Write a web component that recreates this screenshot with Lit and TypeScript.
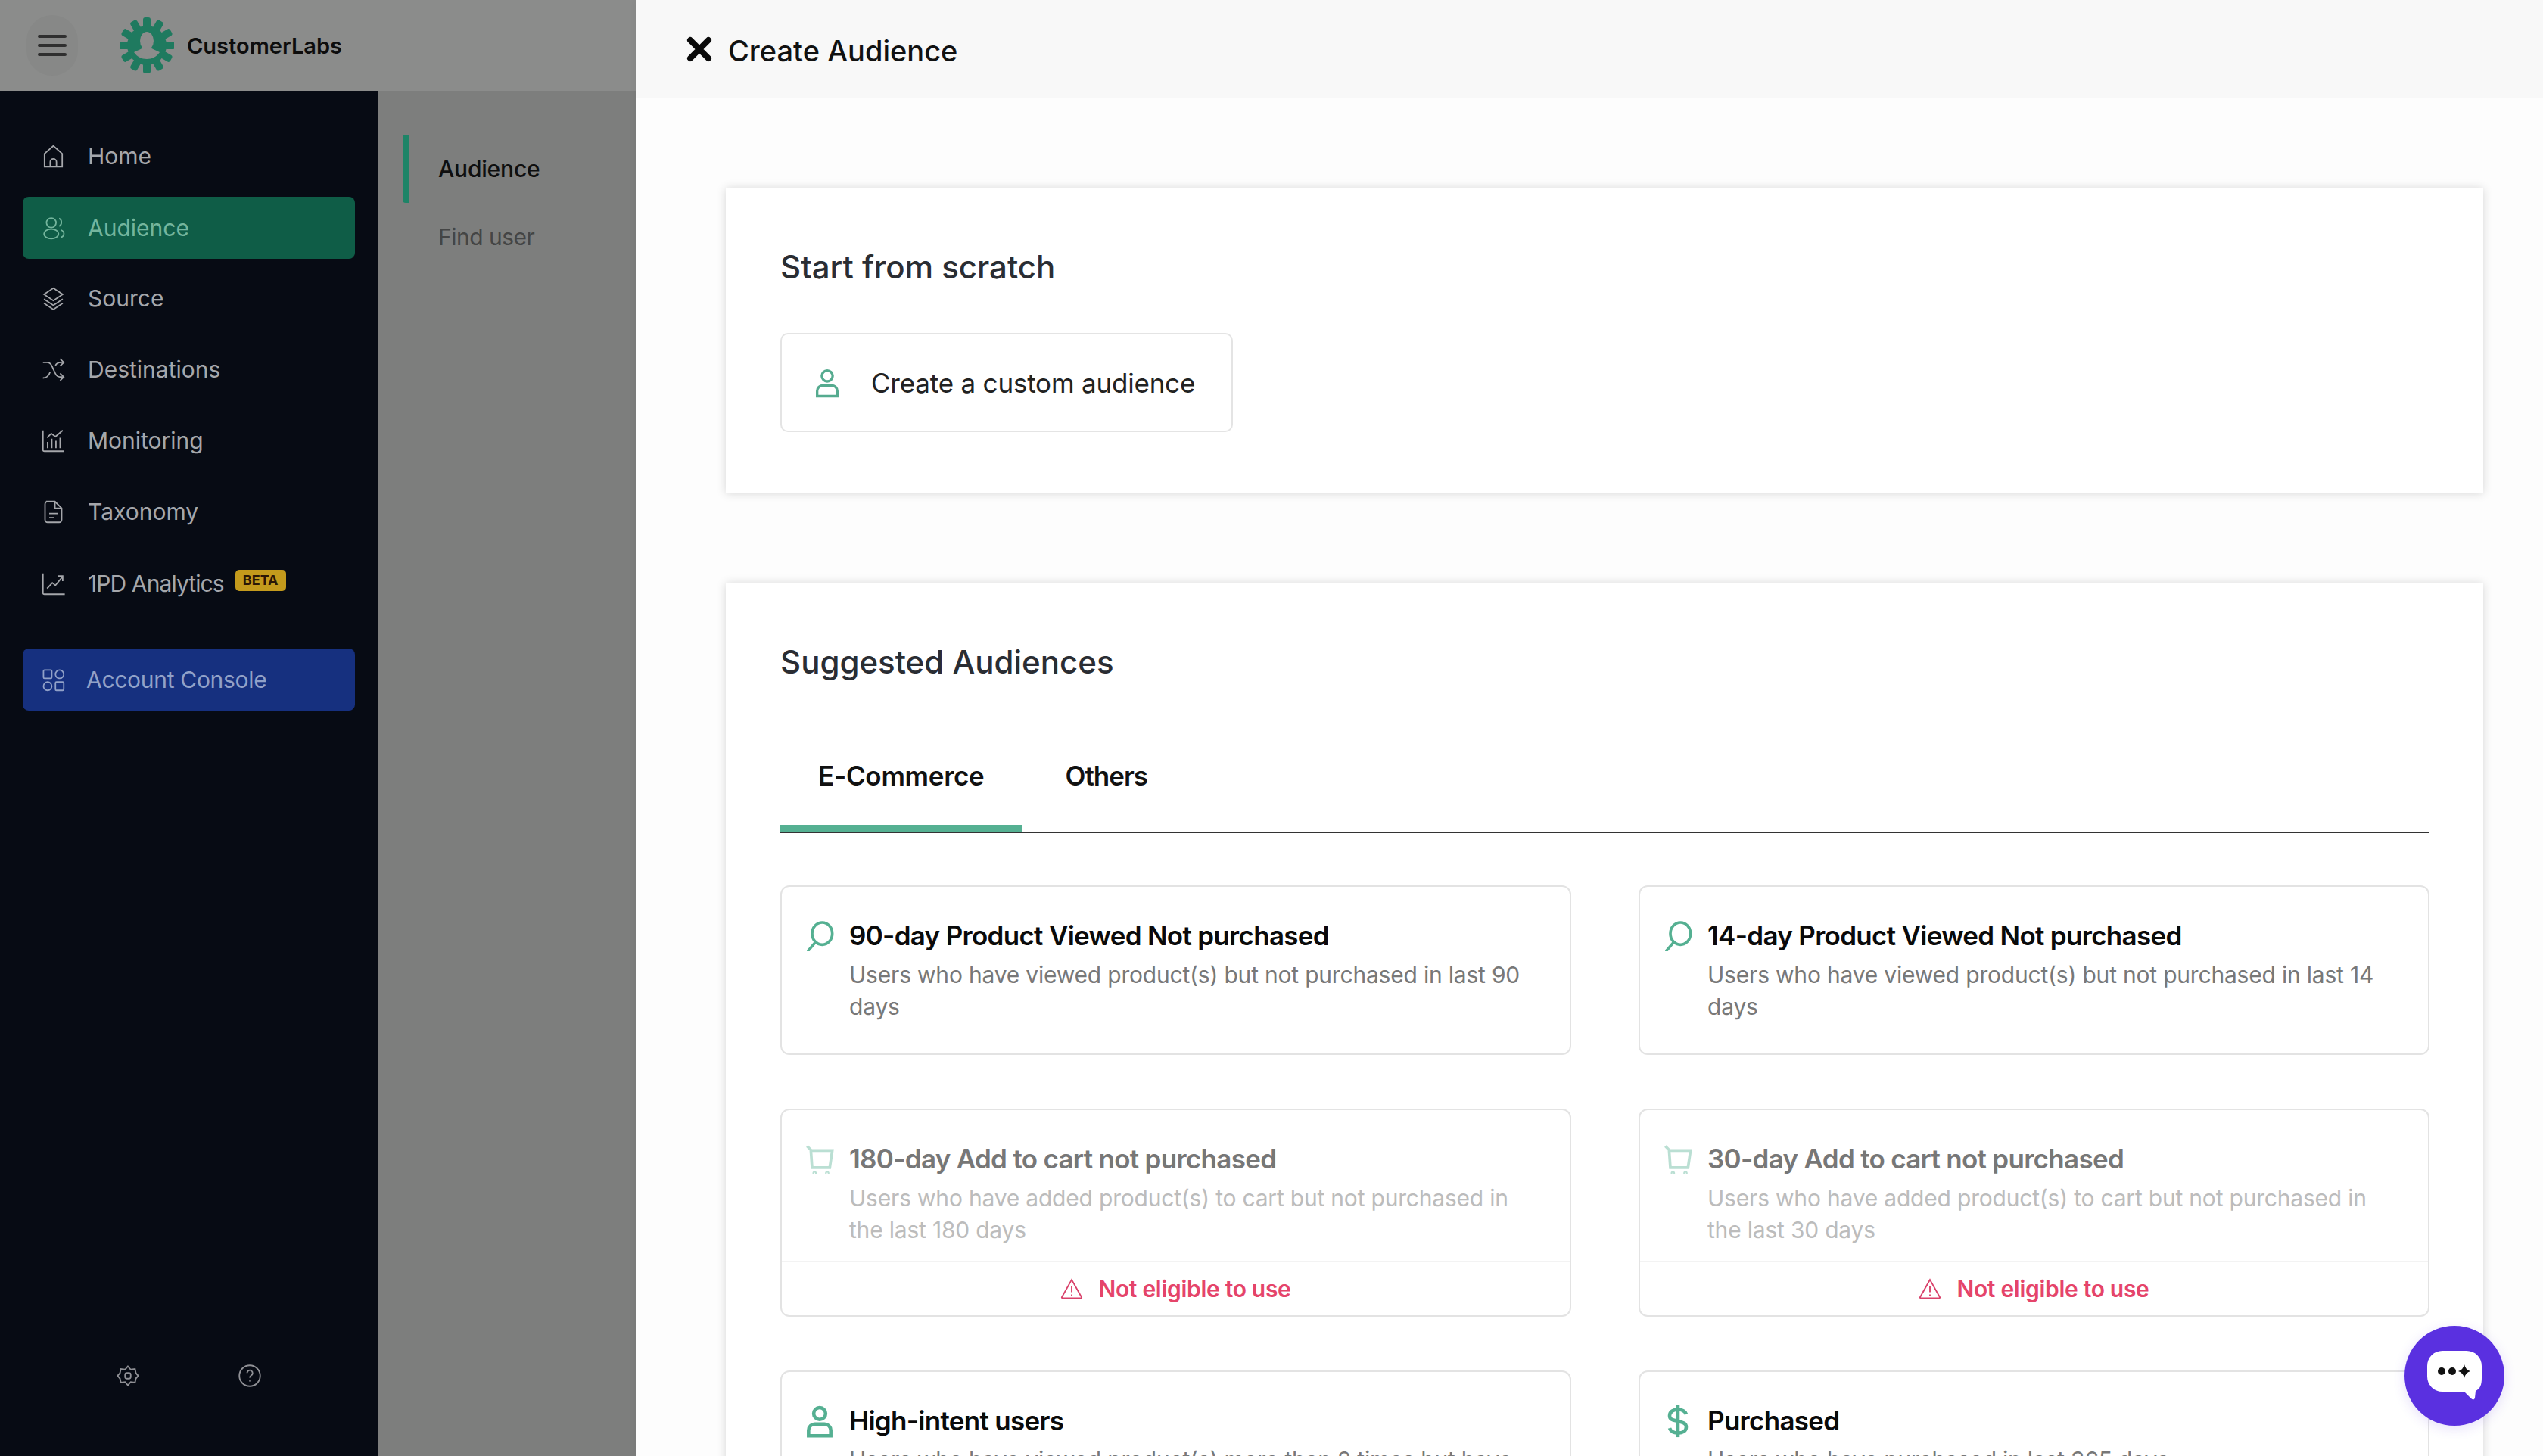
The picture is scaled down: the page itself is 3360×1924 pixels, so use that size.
import { LitElement, html, css, svg } from 'lit';
import { customElement } from 'lit/decorators.js';

const navIcons: Record<string, unknown> = {
  home: svg`<path d="M3.5 22V9.5L12 2l8.5 7.5V22z"/><path d="M9 22v-4.5a3 3 0 0 1 6 0V22"/>`,
  audience: svg`<ellipse cx="10" cy="6.8" rx="4.6" ry="4.6"/><ellipse cx="10" cy="17.4" rx="7" ry="4.6"/><path d="M17.5 2.6c3 1.2 3 6 .2 7.6M19.5 13.8c3.5 1.4 3.5 5.6 0 7"/>`,
  source: svg`<path d="M12 2l9 6-9 6-9-6z"/><path d="M3 12.5l9 6 9-6"/><path d="M3 16.5l9 6 9-6"/>`,
  dest: svg`<path d="M2 5h4c3 0 4 2 6 6.5s3 7.5 6 7.5h3.5"/><path d="M2 20c4 0 6-3 7-6M14 8c1-2 3-3 5-3h2.5"/><path d="M18.5 1.5L22 5l-3.5 3.5M18.5 15.5L22 19l-3.5 3.5"/>`,
  monitor: svg`<path d="M2 2v18.5q0 1.5 1.5 1.5H22"/><path d="M6.5 19v-6M10.500 19v-9M14.500 19v-7M18.500 19v-10"/><path d="M6 9l4-4 4 3 7-6"/>`,
  tax: svg`<path d="M5 2h8.500L20 8.500V19.500a2.500 2.500 0 0 1-2.500 2.500h-11A2.500 2.500 0 0 1 4 19.500V4.500A2.500 2.500 0 0 1 6.500 2z"/><path d="M13.500 2v6.500H20"/><path d="M8 13.500h8M8 17.500h4.500"/>`,
  analytics: svg`<path d="M2 2v18.500q0 1.500 1.500 1.500H23"/><path d="M6 16.500l5-5.500 3 2.500 6.500-8"/><path d="M16 4.500h5v5"/>`,
  console: svg`<rect x="2.500" y="2.500" width="8" height="8" rx="1"/><circle cx="18" cy="6.500" r="4"/><circle cx="6.500" cy="18" r="4"/><rect x="14" y="14" width="8" height="8" rx="1"/>`,
};

const personIcon = svg`<circle cx="12" cy="6.500" r="4.300"/><path d="M4 22.500v-4a4.500 4.500 0 0 1 4.500-4.500h7a4.500 4.500 0 0 1 4.500 4.500v4z"/>`;
const cardIcons: Record<string, unknown> = {
  search: svg`<ellipse cx="14" cy="10" rx="8" ry="8.800"/><path d="M8.500 17L3 23.500" stroke-linecap="round"/>`,
  cart: svg`<path d="M2 1.500l3 3 1 14h14l2-13.500H5"/><circle cx="8" cy="23" r=".6"/><circle cx="18" cy="23" r=".6"/>`,
  person: personIcon,
  dollar: svg`<path d="M18 7c-1-2.500-3-3.500-6-3.500S6 5 6 8s2.500 3.200 6 4 6 1.500 6 4.200-2.500 4.300-6 4.300-5.200-1-6-3.500"/><path d="M12 .5v23"/>`,
};

interface Audience {
  icon: string;
  title: string;
  desc: string;
  blocked?: boolean;
}

const audiences: Audience[] = [
  { icon: 'search', title: '90-day Product Viewed Not purchased', desc: 'Users who have viewed product(s) but not purchased in last 90 days' },
  { icon: 'search', title: '14-day Product Viewed Not purchased', desc: 'Users who have viewed product(s) but not purchased in last 14 days' },
  { icon: 'cart', title: '180-day Add to cart not purchased', desc: 'Users who have added product(s) to cart but not purchased in the last 180 days', blocked: true },
  { icon: 'cart', title: '30-day Add to cart not purchased', desc: 'Users who have added product(s) to cart but not purchased in the last 30 days', blocked: true },
  { icon: 'person', title: 'High-intent users', desc: 'Users who have viewed product(s) more than 2 times but have not purchased' },
  { icon: 'dollar', title: 'Purchased', desc: 'Users who have purchased in last 365 days' },
];

const navItems = [
  { icon: 'home', label: 'Home' },
  { icon: 'audience', label: 'Audience', active: true },
  { icon: 'source', label: 'Source' },
  { icon: 'dest', label: 'Destinations' },
  { icon: 'monitor', label: 'Monitoring' },
  { icon: 'tax', label: 'Taxonomy' },
  { icon: 'analytics', label: '1PD Analytics', beta: true },
];

@customElement('app-root')
export class AppRoot extends LitElement {
  static styles = css`
    :host {
      display: block;
      width: 3360px;
      height: 1924px;
      overflow: hidden;
      position: relative;
      font-family: Inter, 'Open Sans', sans-serif;
      background: #fdfdfd;
    }
    .page { display: grid; grid-template-columns: 840px 1fr; height: 1924px; }

    .left { display: grid; grid-template-rows: 120px 1fr; grid-template-columns: 500px 340px; height: 1924px; }
    .top {
      grid-column: 1 / 3;
      background: #8b8c8b;
      display: flex;
      align-items: center;
      padding-left: 35px;
    }
    .burger {
      width: 68px;
      height: 80px;
      border-radius: 34px;
      background: #878887;
      display: flex;
      flex-direction: column;
      justify-content: center;
      align-items: center;
      gap: 8px;
    }
    .burger i { display: block; width: 38px; height: 4px; border-radius: 2px; background: #2f2f2f; }
    .logo { width: 72px; height: 76px; margin-left: 55px; }
    .brand { margin-left: 17px; font-size: 29px; font-weight: 600; color: #0d0d0d; }

    .side { background: #070b14; display: flex; flex-direction: column; padding: 45px 31px 91px 30px; }
    .item {
      height: 82px;
      margin-bottom: 12px;
      border-radius: 8px;
      display: flex;
      align-items: center;
      padding-left: 24px;
      gap: 29px;
      color: #a5a7ab;
      font-size: 30px;
    }
    .item svg { width: 33px; height: 33px; fill: none; stroke: currentColor; stroke-width: 1.300; flex: none; }
    .item.active { background: #0f5d47; color: #74b59d; margin-top: 1px; margin-bottom: 11px; }
    .item.console { background: #16307f; color: #91a1c8; margin-top: 34px; margin-bottom: 0; gap: 27px; letter-spacing: -.3px; }
    .item.tight { letter-spacing: -.9px; padding-top: 2px; height: 80px; }
    .beta {
      background: #c39a1c;
      color: #2a1706;
      font-size: 18px;
      font-weight: 700;
      letter-spacing: 0;
      height: 28px;
      padding: 0 10px;
      border-radius: 5px;
      display: flex;
      align-items: center;
      margin: -9px 0 0 -14px;
    }
    .foot { margin-top: auto; display: flex; gap: 131px; padding-left: 124px; color: #8f9095; }
    .foot svg { width: 30px; height: 30px; fill: none; stroke: currentColor; stroke-width: 1.500; }

    .sub { background: #7d7e7d; padding-top: 58px; }
    .sub div {
      height: 90px;
      margin-left: 32px;
      padding-left: 39px;
      border-left: 8px solid transparent;
      display: flex;
      align-items: center;
      font-size: 30px;
      letter-spacing: -.5px;
      color: #444545;
    }
    .sub .on { color: #0f0f0f; font-weight: 500; letter-spacing: -.2px; border-left-color: #1e8467; border-radius: 4px; }

    .main { display: flex; flex-direction: column; height: 1924px; overflow: hidden; box-shadow: 0 0 10px rgba(0, 0, 0, .06); }
    .head {
      height: 130px;
      box-sizing: border-box;
      flex: none;
      background: #f8f8f8;
      display: flex;
      align-items: center;
      padding: 4px 0 0 67px;
      gap: 21px;
      font-size: 38px;
      font-weight: 500;
      color: #111;
    }
    .head svg { width: 34px; height: 34px; margin-top: -4px; }
    .body { padding: 119px 79px 0 119px; display: flex; flex-direction: column; gap: 119px; }
    .panel { background: #fff; padding: 72px 71px 81px 72px; box-shadow: 0 0 12px rgba(0, 0, 0, .16); }
    h2 { margin: 0; font-size: 42px; line-height: 64px; font-weight: 500; color: #2a2d33; }

    .custom {
      margin-top: 55px;
      width: 598px;
      height: 131px;
      box-sizing: border-box;
      border: 2px solid #e4e4e4;
      border-radius: 10px;
      display: flex;
      align-items: center;
      padding-left: 40px;
      gap: 38px;
      font-size: 35px;
      letter-spacing: -.2px;
      color: #222;
    }
    .custom svg { width: 40px; height: 40px; fill: none; stroke: #55ab8f; stroke-width: 2; flex: none; }

    .tabs { margin-top: 53px; display: flex; gap: 7px; border-bottom: 1.500px solid #333; }
    .tab {
      height: 140px;
      box-sizing: border-box;
      padding: 0 50px 10px;
      display: flex;
      align-items: center;
      font-size: 35px;
      font-weight: 600;
      letter-spacing: -.3px;
      color: #111;
    }
    .tab.on { box-shadow: inset 0 -10px 0 #55b092; }
    .tab.narrow { letter-spacing: -1px; }

    .grid { margin-top: 69px; display: grid; grid-template-columns: 1045px 1045px; gap: 71px 89px; }
    .card { box-sizing: border-box; border: 2px solid #e3e3e3; border-radius: 12px; background: #fff; }
    .card-main { display: flex; padding: 43px 30px 41px 30px; gap: 19px; }
    .card.blocked .card-main { padding-bottom: 20px; }
    .card-main > svg { width: 40px; height: 40px; fill: none; stroke: #55b092; stroke-width: 2.200; flex: none; margin-top: 2px; }
    .card-main > svg.tall { width: 44px; height: 44px; margin: 0 -2px; stroke-width: 2.500; }
    .card h3 { margin: 0 0 10px; font-size: 35px; line-height: 42px; font-weight: 600; letter-spacing: -.7px; color: #0a0a0a; }
    .card p { margin: 0; max-width: 905px; font-size: 30px; line-height: 42px; letter-spacing: -.2px; color: #787878; }
    .card.blocked .card-main > svg { opacity: .4; }
    .card.blocked h3 { color: #777; }
    .card.blocked p { color: #bcbcbc; }
    .warn {
      height: 71px;
      border-top: 1px solid #f3f3f3;
      display: flex;
      align-items: center;
      justify-content: center;
      gap: 20px;
      font-size: 30px;
      font-weight: 600;
      letter-spacing: -.3px;
      color: #e5446a;
    }
    .warn svg { width: 30px; height: 30px; fill: none; stroke: #d9416a; stroke-width: 1.500; }

    .chat {
      position: absolute;
      left: 3177px;
      top: 1752px;
      width: 132px;
      height: 132px;
      border-radius: 50%;
      background: #5a30e0;
      box-shadow: 0 4px 16px rgba(90, 48, 224, .15);
      display: flex;
      align-items: center;
      justify-content: center;
    }
    .chat svg { width: 72px; height: 66px; }
  `;

  private gear() {
    const teeth = Array.from({ length: 12 }, (_, i) => i * 30);
    return html`<svg class="logo" viewBox="0 0 72 76">
      ${teeth.map((a) => svg`<rect x="31" y="1" width="10" height="14" rx="3" fill="#1f7a5f" transform="rotate(${a} 36 38)"/>`)}
      <circle cx="36" cy="38" r="26" fill="#1f7a5f"/>
      <ellipse cx="36" cy="32" rx="9" ry="12" fill="#8b8c8b"/>
      <path d="M19 47c6-3 10-4 13-7h8c3 3 7 4 13 7-4 6-10 9-17 9s-13-3-17-9z" fill="#8b8c8b"/>
    </svg>`;
  }

  private navRow(n: { icon: string; label: string; active?: boolean; beta?: boolean }) {
    return html`<div class="item ${n.active ? 'active' : ''} ${n.beta ? 'tight' : ''}">
      <svg viewBox="0 0 24 24">${navIcons[n.icon]}</svg>
      <span>${n.label}</span>
      ${n.beta ? html`<span class="beta">BETA</span>` : ''}
    </div>`;
  }

  private card(a: Audience) {
    const tall = a.icon === 'person' || a.icon === 'dollar';
    return html`<div class="card ${a.blocked ? 'blocked' : ''}">
      <div class="card-main">
        <svg class=${tall ? 'tall' : ''} viewBox="0 0 24 24">${cardIcons[a.icon]}</svg>
        <div>
          <h3>${a.title}</h3>
          <p>${a.desc}</p>
        </div>
      </div>
      ${a.blocked
        ? html`<div class="warn">
            <svg viewBox="0 0 24 24"><path d="M12 2.500L22.500 21a.8.8 0 0 1-.7 1H2.200a.8.8 0 0 1-.7-1z"/><path d="M12 9v6.500M12 18v1.200"/></svg>
            <span>Not eligible to use</span>
          </div>`
        : ''}
    </div>`;
  }

  render() {
    return html`
      <div class="page">
        <div class="left">
          <div class="top">
            <div class="burger"><i></i><i></i><i></i></div>
            ${this.gear()}
            <span class="brand">CustomerLabs</span>
          </div>
          <nav class="side">
            ${navItems.map((n) => this.navRow(n))}
            <div class="item console">
              <svg viewBox="0 0 24 24">${navIcons.console}</svg>
              <span>Account Console</span>
            </div>
            <div class="foot">
              <svg viewBox="0 0 24 24"><path d="M12 2l3 3.400 4.500-.6.900 4.400L23 12l-2.600 2.800-.9 4.400-4.500-.6L12 22l-3-3.400-4.500.6-.9-4.400L1 12l2.600-2.800.9-4.400 4.500.6z"/><rect x="9" y="9" width="6" height="6" rx="2"/></svg>
              <svg viewBox="0 0 24 24"><circle cx="12" cy="12" r="11"/><path d="M9.200 9a2.900 2.900 0 1 1 4.300 2.600c-1 .6-1.500 1.200-1.500 2.400M12 17v1"/></svg>
            </div>
          </nav>
          <div class="sub">
            <div class="on">Audience</div>
            <div>Find user</div>
          </div>
        </div>

        <main class="main">
          <header class="head">
            <svg viewBox="0 0 34 34"><path d="M5 5l24 24M29 5L5 29" stroke="#0a0a0a" stroke-width="8" stroke-linecap="round"/></svg>
            <span>Create Audience</span>
          </header>
          <div class="body">
            <section class="panel">
              <h2>Start from scratch</h2>
              <div class="custom">
                <svg viewBox="0 0 24 24">${personIcon}</svg>
                <span>Create a custom audience</span>
              </div>
            </section>
            <section class="panel">
              <h2>Suggested Audiences</h2>
              <div class="tabs">
                <div class="tab on">E-Commerce</div>
                <div class="tab narrow">Others</div>
              </div>
              <div class="grid">${audiences.map((a) => this.card(a))}</div>
            </section>
          </div>
        </main>
      </div>
      <div class="chat">
        <svg viewBox="0 0 72 66">
          <path d="M20 0h32a20 20 0 0 1 20 20v16c0 9-2 14-8 17l-1 9c-.5 3-3 3-5 1l-9-9H20A20 20 0 0 1 0 34V20A20 20 0 0 1 20 0z" fill="#fff"/>
          <circle cx="19" cy="27" r="5" fill="#111"/>
          <circle cx="33" cy="27" r="5" fill="#111"/>
          <path d="M49 18q1.500 7 8 9-6.500 2-8 9-1.500-7-8-9 6.500-2 8-9z" fill="#111"/>
        </svg>
      </div>
    `;
  }
}
